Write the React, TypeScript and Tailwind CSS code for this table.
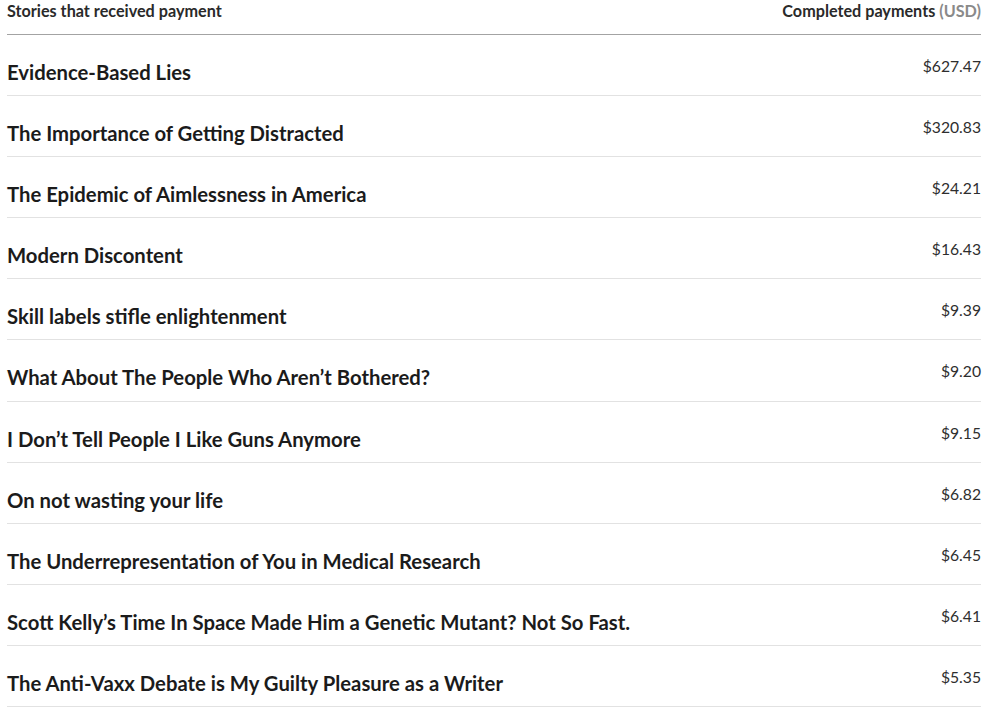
const stories = [
  { title: 'Evidence-Based Lies', amount: '$627.47' },
  { title: 'The Importance of Getting Distracted', amount: '$320.83' },
  { title: 'The Epidemic of Aimlessness in America', amount: '$24.21' },
  { title: 'Modern Discontent', amount: '$16.43' },
  { title: 'Skill labels stifle enlightenment', amount: '$9.39' },
  { title: 'What About The People Who Aren’t Bothered?', amount: '$9.20' },
  { title: 'I Don’t Tell People I Like Guns Anymore', amount: '$9.15' },
  { title: 'On not wasting your life', amount: '$6.82' },
  { title: 'The Underrepresentation of You in Medical Research', amount: '$6.45' },
  { title: 'Scott Kelly’s Time In Space Made Him a Genetic Mutant? Not So Fast.', amount: '$6.41' },
  { title: 'The Anti-Vaxx Debate is My Guilty Pleasure as a Writer', amount: '$5.35' },
];

export default function App() {
  return (
    <div className="w-[1000px] h-[710px] overflow-hidden bg-white font-['Lato',sans-serif] text-[#1b1b1b]">
      <div className="ml-[7px] w-[974px]">
        <div className="flex h-[35px] items-start justify-between border-b-[1.5px] border-[#a3a3a3] pt-[1px] text-[16.2px] font-bold leading-[20px] text-[#2a2a2a]">
          <span>Stories that received payment</span>
          <span>
            Completed payments <span className="text-[#8a8a8a]">(USD)</span>
          </span>
        </div>
        {stories.map((s) => (
          <div
            key={s.title}
            className="flex h-[61.1px] items-start justify-between border-b border-[#e2e2e2]"
          >
            <span className="pt-[25px] text-[20.3px] font-bold leading-[24px]">{s.title}</span>
            <span className="pt-[21px] text-[15.7px] leading-[20px] text-[#2e2e2e]">{s.amount}</span>
          </div>
        ))}
      </div>
    </div>
  );
}
